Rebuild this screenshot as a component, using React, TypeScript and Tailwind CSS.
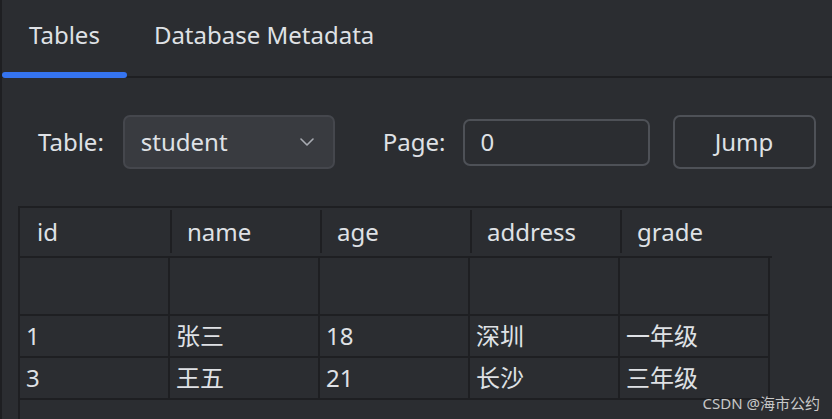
import React from 'react';

const columns = ['id', 'name', 'age', 'address', 'grade'];

const rows: string[][] = [
  ['', '', '', '', ''],
  ['1', '张三', '18', '深圳', '一年级'],
  ['3', '王五', '21', '长沙', '三年级'],
];

const font = { fontFamily: '"Noto Sans", "Noto Sans CJK SC", sans-serif' };

const ChevronDown = () => (
  <svg width="14" height="8" viewBox="0 0 14 8" fill="none">
    <path d="M1 1l6 6 6-6" stroke="#a8abb2" strokeWidth="1.6" strokeLinecap="round" strokeLinejoin="round" />
  </svg>
);

const Tabs = () => (
  <div className="flex h-[78px] items-stretch border-b-2 border-[#1e1f22]">
    <div className="relative flex items-center px-[27px] pb-[6px] text-[24px] text-[#dfe1e5]">
      Tables
      <div className="absolute bottom-[-2px] left-0 right-0 h-[6px] rounded-full bg-[#3574f0]" />
    </div>
    <div className="flex items-center px-[27px] pb-[6px] text-[24px] text-[#dfe1e5]">Database Metadata</div>
  </div>
);

const Controls = () => (
  <div className="mt-[37px] flex h-[54px] items-center pl-[36px] text-[24px] text-[#dfe1e5]">
    <span>Table:</span>
    <div className="ml-[19px] flex h-[54px] w-[212px] items-center justify-between rounded-[7px] border-2 border-[#45474d] bg-[#393b40] pl-[16px] pr-[19px]">
      <span>student</span>
      <ChevronDown />
    </div>
    <span className="ml-[48px]">Page:</span>
    <div className="ml-[17px] flex h-[47px] w-[187px] items-center rounded-[7px] border-2 border-[#4e5157] pl-[16px]">0</div>
    <button className="ml-[23px] flex h-[54px] w-[143px] items-center justify-center rounded-[7px] border-2 border-[#4e5157] text-[24px] text-[#dfe1e5]">
      Jump
    </button>
  </div>
);

const DataTable = () => (
  <div className="ml-[16px] mt-[37px] h-[213px] border-l-2 border-t-2 border-[#1e1f22]">
    <div className="flex h-[50px] w-[752px] border-b-2 border-[#1e1f22]">
      {columns.map((c, i) => (
        <div key={c} className={`flex items-stretch ${i === 0 ? 'w-[152px]' : 'w-[150px]'}`}>
          <div className={`flex flex-1 items-center text-[24px] text-[#dfe1e5] ${i === 0 ? 'pl-[17px]' : 'pl-[15px]'}`}>{c}</div>
          {i < columns.length - 1 && <div className="mb-[3px] mt-[2px] w-[2px] bg-[#1e1f22]" />}
        </div>
      ))}
    </div>
    {rows.map((r, ri) => (
      <div key={ri} className={`flex w-[750px] border-b-2 border-[#1e1f22] ${ri === 0 ? 'h-[58px]' : 'h-[42px]'}`}>
        {r.map((v, ci) => (
          <div key={ci} className="flex w-[150px] items-center border-r-2 border-[#1e1f22] pl-[6px] text-[24px] text-[#dfe1e5]">
            {v}
          </div>
        ))}
      </div>
    ))}
  </div>
);

export default function App() {
  return (
    <div className="relative h-[419px] w-[832px] overflow-hidden border-l-2 border-[#1e1f22] bg-[#2b2d31]" style={font}>
      <Tabs />
      <Controls />
      <DataTable />
      <div className="absolute bottom-[5px] right-[12px] text-[15px] text-[#c8c8c8]">CSDN @海市公约</div>
    </div>
  );
}
